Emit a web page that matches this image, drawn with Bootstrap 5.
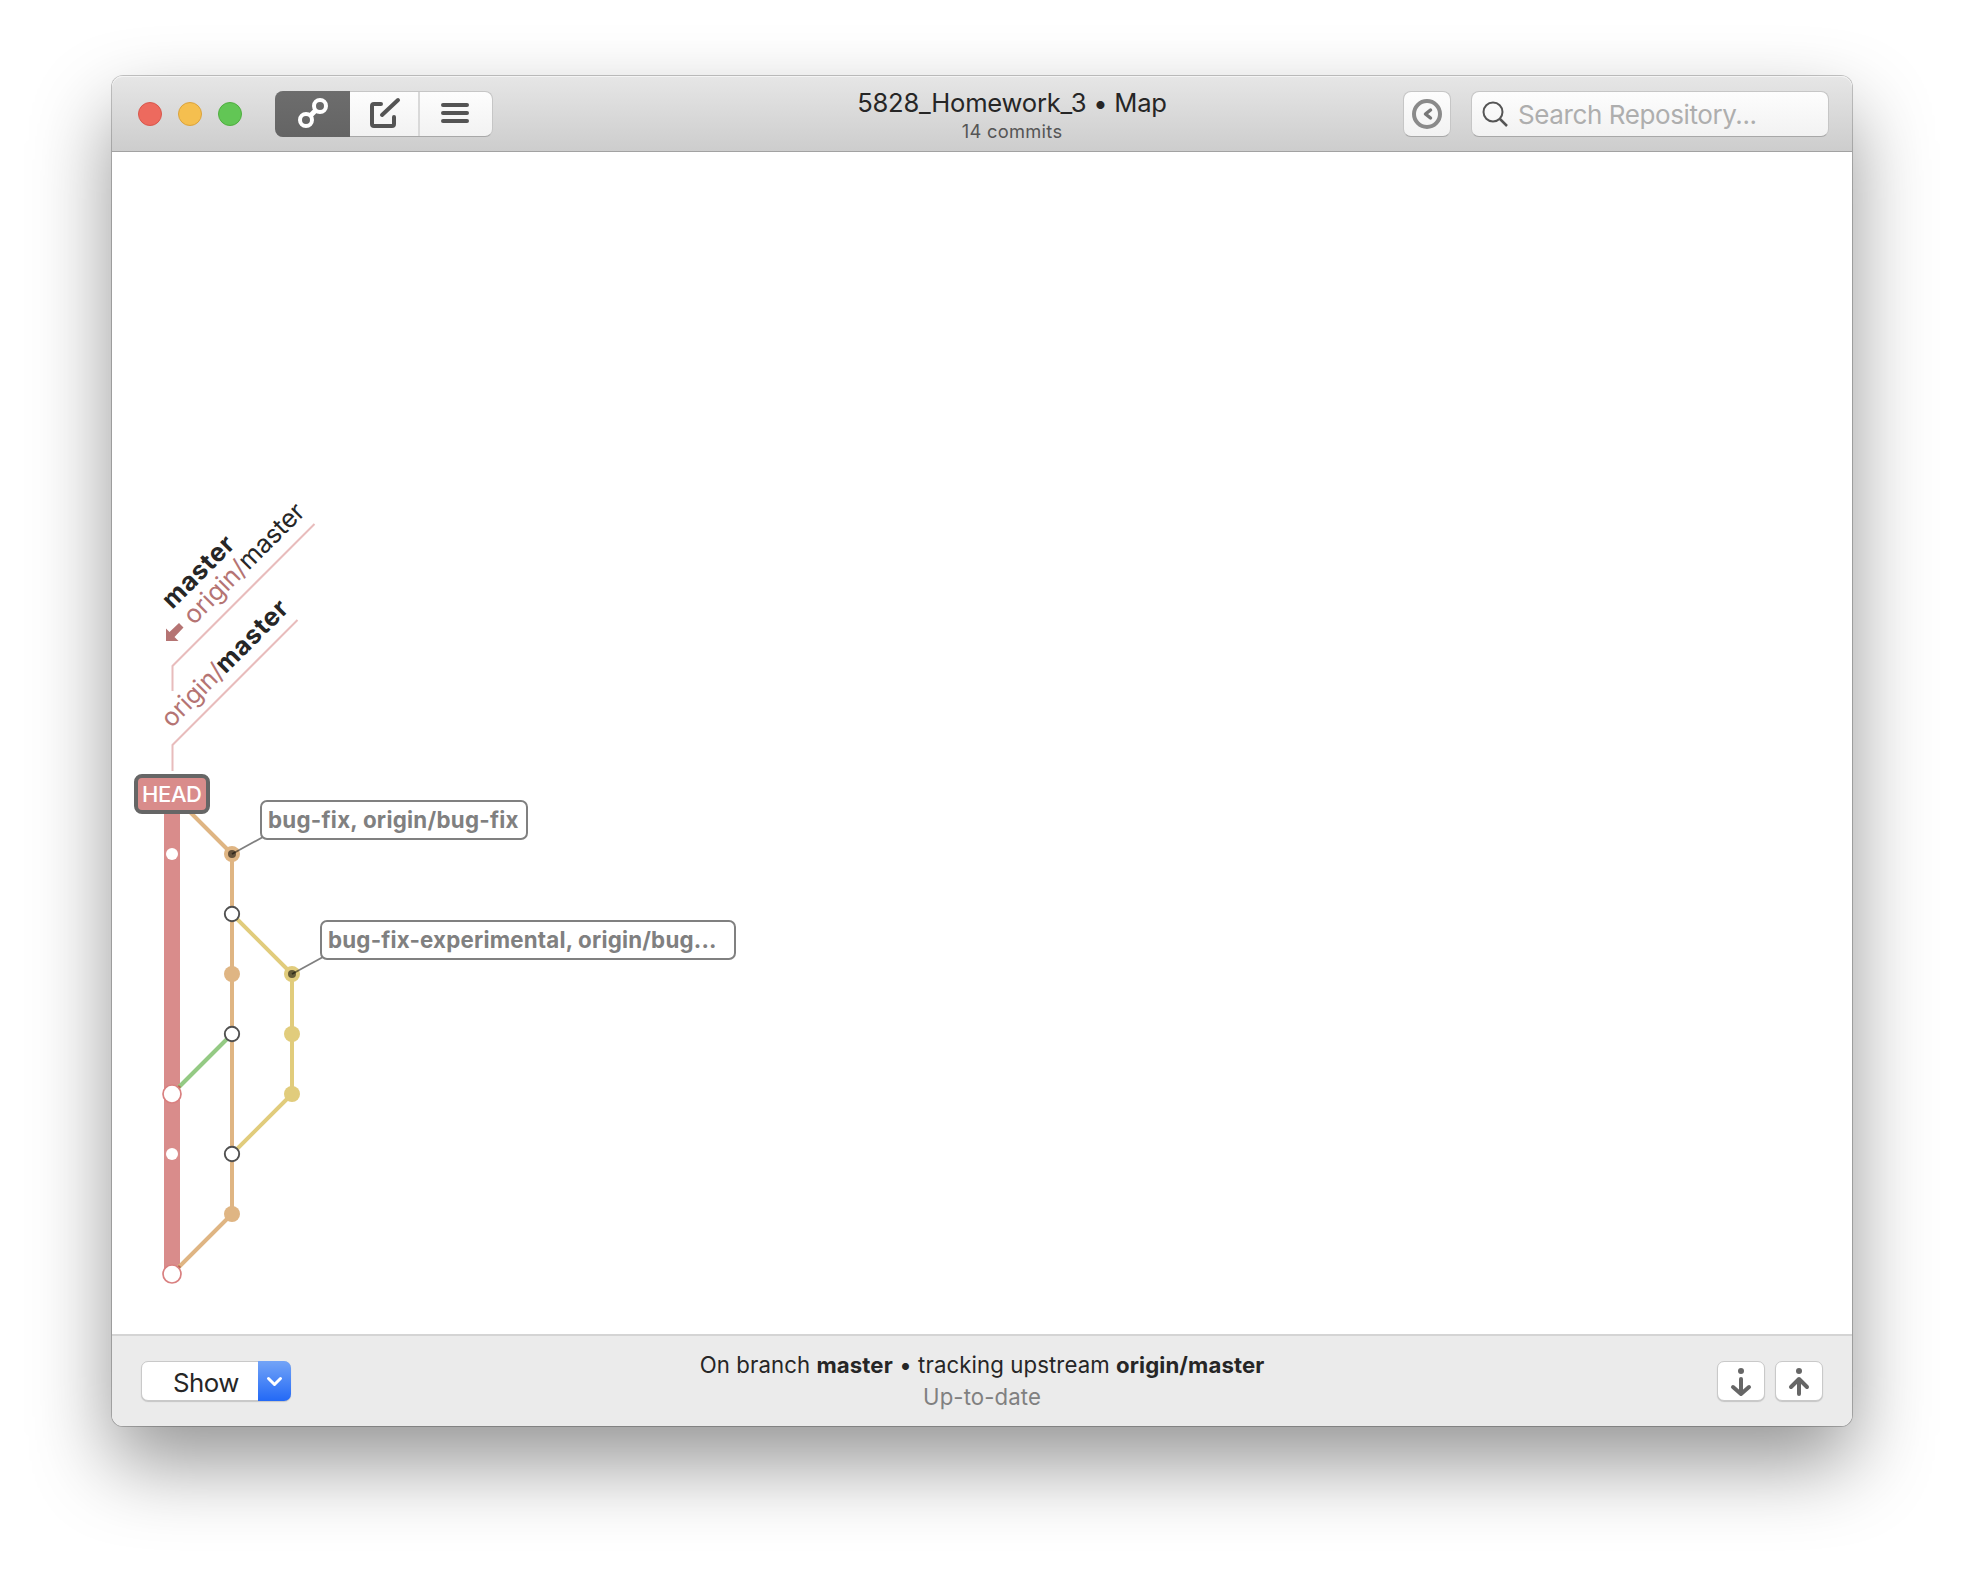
<!DOCTYPE html>
<html lang="en">
<head>
<meta charset="utf-8">
<title>5828_Homework_3 • Map</title>
<link href="https://cdn.jsdelivr.net/npm/bootstrap@5.3.0/dist/css/bootstrap.min.css" rel="stylesheet">
<style>
body{background:#fff;font-family:Inter,"Liberation Sans",sans-serif;color:#262626;padding:76px 112px 0;min-height:1574px}
.win{width:1740px;height:1350px;border-radius:11px;box-shadow:0 0 0 1px rgba(0,0,0,.22),0 37px 80px rgba(0,0,0,.42)}
.titlebar{height:76px;flex:none;background:linear-gradient(#e6e6e6,#cdcdcd);border-bottom:1px solid #a2a2a2;box-shadow:inset 0 1px #f4f4f4;padding:0 23px 0 26px;border-radius:11px 11px 0 0}
.light{width:24px;height:24px;border-radius:50%;border:1px solid}
.l-red{background:#ed6a5e;border-color:#d8574c}
.l-amber{background:#f5bf4f;border-color:#dba33c}
.l-green{background:#62c655;border-color:#4fae3f}
.ctl{background:linear-gradient(#fdfdfd,#f2f2f2);border:1px solid #c6c6c6;border-bottom-color:#a8a8a8;border-radius:8px;padding:0;height:46px}
.seg{width:218px;margin-left:33px}
.seg .btn{border:0;border-radius:0;padding:0;height:46px}
.seg .s1{width:75px;background:linear-gradient(#6d6d6d,#646464);margin:-1px 0 -1px -1px;border-radius:8px 0 0 8px}
.seg .s2{width:70px;height:44px;border-right:2px solid #d9d9d9}
.seg .s3{width:73px;height:44px}
.heading{padding-left:128px;padding-top:5px}
.h-main{font-size:25.6px;line-height:30px;letter-spacing:-.25px}
.h-sub{font-size:18.3px;line-height:26px;color:#555;letter-spacing:.3px}
.back{width:48px;margin-right:20px}
.find{width:358px;padding-left:9px}
.find input{font-size:26px;letter-spacing:-.4px;padding:2px 0 0 9px;height:44px;color:#333}
.find input::placeholder{color:#aeaeae;opacity:1}
.foot{height:92px;flex:none;background:#ebebeb;border-top:2px solid #d4d4d4;padding:0 29px;border-radius:0 0 11px 11px}
.side{width:160px}
.tools{gap:10px}
.plain{background:#fff;border:1px solid #c9c9c9;border-radius:7px;height:40px;padding:0;box-shadow:0 1px 1px rgba(0,0,0,.16)}
.show-box{width:150px}
.show-l{font-size:25.8px;letter-spacing:-.5px;width:117px;padding:3px 0 0 31px;line-height:36px;text-align:left;color:#262626}
.show-r{width:33px;height:40px;margin:-1px -1px -1px 0;background:linear-gradient(#73a4f7,#2369f6);border-radius:0 7px 7px 0}
.st{font-size:22.2px;line-height:32px;letter-spacing:.1px}
.st-sub{color:#808080}
</style>
</head>
<body>
<div class="win d-flex flex-column bg-white">
  <header class="titlebar d-flex align-items-center">
    <div class="d-flex gap-3">
      <span class="light l-red"></span><span class="light l-amber"></span><span class="light l-green"></span>
    </div>
    <div class="seg ctl d-flex">
      <button class="btn s1" aria-label="Map"><svg class="d-block" width="75" height="46" fill="none" stroke="#fff" stroke-width="4"><circle cx="31" cy="29" r="6"/><circle cx="45" cy="15" r="6"/><path d="M35 25l6-6" stroke-width="5"/></svg></button>
      <button class="btn s2" aria-label="Commit"><svg class="d-block" width="68" height="44" fill="none" stroke="#545454" stroke-width="4" stroke-linecap="round" stroke-linejoin="round"><path d="M31 12h-7q-2 0-2 2v18q0 2 2 2h18q2 0 2-2v-7"/><path d="M32 23L48 8"/></svg></button>
      <button class="btn s3" aria-label="List"><svg class="d-block" width="73" height="44" fill="none" stroke="#545454" stroke-width="4" stroke-linecap="round"><path d="M23 13h24M23 21h24M23 29h24"/></svg></button>
    </div>
    <div class="heading flex-fill text-center">
      <div class="h-main">5828_Homework_3 • Map</div>
      <div class="h-sub">14 commits</div>
    </div>
    <button class="btn ctl back" aria-label="Back"><svg class="d-block" width="46" height="44" fill="none" stroke="#8a8a8a" stroke-width="4"><circle cx="23" cy="22" r="13"/><path d="M26.500 18l-5 4 5 4" stroke="#777" stroke-linecap="round" stroke-linejoin="round" stroke-width="3.500"/></svg></button>
    <div class="ctl find d-flex align-items-center">
      <svg class="flex-shrink-0" width="28" height="28" fill="none" stroke="#555" stroke-width="2"><circle cx="12" cy="12" r="9.500"/><path d="M19 19l7 7" stroke-width="2.500"/></svg>
      <input class="form-control border-0 bg-transparent shadow-none" placeholder="Search Repository...">
    </div>
  </header>

  <main class="flex-fill overflow-hidden">
    <svg class="d-block" width="1740" height="1182" viewBox="112 152 1740 1182" font-family="Inter,'Liberation Sans',sans-serif" fill="none">
      <g stroke="#e8bcbc" stroke-width="2"><path d="M314.500 524L172.500 666v25"/><path d="M297.500 620L172.500 745v26"/></g>
      <g transform="rotate(-45)" font-size="25.500" fill="#262626">
        <text x="-309.500" y="553" font-weight="700" textLength="90.500">master</text>
        <text x="-305.500" y="579.500" fill="#b57473" textLength="77.500">origin/</text>
        <text x="-228" y="579.500" textLength="81.500">master</text>
        <text x="-394" y="636.500" fill="#b57473" textLength="77">origin/</text>
        <text x="-317.500" y="636.500" font-weight="700" textLength="91">master</text>
      </g>
      <path fill="#b57473" d="M166 641v-12.500l3.500 3.500 9.500-9 4.500 4.500-9 9.500 4 4z"/>
      <path d="M172 812V1274" stroke="#d98c8b" stroke-width="16"/>
      <g stroke-width="4" stroke-linejoin="round">
        <path d="M172 794l60 60V1214l-57 57" stroke="#dfb583"/>
        <path d="M232 914l60 60v120l-60 60" stroke="#e1cc7c"/>
        <path d="M232 1034l-57 57" stroke="#94ca84"/>
      </g>
      <path d="M176 1090l4-4M176 1270l4-4" stroke="#b86a4d" stroke-width="3"/>
      <g fill="#dfb583"><circle cx="232" cy="854" r="8"/><circle cx="232" cy="974" r="8"/><circle cx="232" cy="1214" r="8"/></g>
      <g fill="#e1cc7c"><circle cx="292" cy="974" r="8"/><circle cx="292" cy="1034" r="8"/><circle cx="292" cy="1094" r="8"/></g>
      <g fill="#fff" stroke="#505050" stroke-width="1.900"><circle cx="232" cy="914" r="7.200"/><circle cx="232" cy="1034" r="7.200"/><circle cx="232" cy="1154" r="7.200"/></g>
      <g fill="#fff"><circle cx="172" cy="854" r="6"/><circle cx="172" cy="1154" r="6"/><g stroke="#d98080" stroke-width="1.700"><circle cx="172" cy="1094" r="9"/><circle cx="172" cy="1274" r="9"/></g></g>
      <g fill="#000" fill-opacity=".55"><circle cx="232" cy="854" r="4"/><circle cx="292" cy="974" r="4"/></g>
      <g stroke="#000" stroke-opacity=".5" stroke-width="1.800"><path d="M232 854l31-17M292 974l31-17"/></g>
      <g fill="#fff" stroke="#808080" stroke-width="2"><rect x="261" y="801" width="266" height="38" rx="6"/><rect x="321" y="921" width="414" height="38" rx="6"/></g>
      <g fill="#808080" font-size="22.300" font-weight="700">
        <text x="268" y="828" textLength="250.500">bug-fix, origin/bug-fix</text>
        <text x="328" y="948" textLength="388.500">bug-fix-experimental, origin/bug...</text>
      </g>
      <rect x="136" y="776" width="72" height="36" rx="6" fill="#d98c8b" stroke="#666" stroke-width="4"/>
      <text x="142" y="802" font-size="22" font-weight="500" fill="#fff" textLength="60">HEAD</text>
    </svg>
  </main>

  <footer class="foot d-flex align-items-center justify-content-between">
    <div class="side"><div class="plain show-box d-flex">
      <button class="btn border-0 show-l">Show</button>
      <button class="btn border-0 show-r p-0" aria-label="Options"><svg class="d-block" width="33" height="40" fill="none" stroke="#fff" stroke-width="3" stroke-linecap="round" stroke-linejoin="round"><path d="M10.500 17.500l6 6 6-6"/></svg></button>
    </div></div>
    <div class="text-center">
      <div class="st">On branch <b>master</b> • tracking upstream <b>origin/master</b></div>
      <div class="st st-sub">Up-to-date</div>
    </div>
    <div class="side tools d-flex justify-content-end">
      <button class="btn plain" aria-label="Pull"><svg class="d-block" width="46" height="38" fill="none" stroke="#666" stroke-width="4" stroke-linecap="round" stroke-linejoin="round"><circle cx="23" cy="9" r="3" fill="#666" stroke="none"/><path d="M23 17v15M15 25l8 7 8-7"/></svg></button>
      <button class="btn plain" aria-label="Push"><svg class="d-block" width="46" height="38" fill="none" stroke="#666" stroke-width="4" stroke-linecap="round" stroke-linejoin="round"><circle cx="23" cy="9" r="3" fill="#666" stroke="none"/><path d="M23 32V17M15 25l8-8 8 8"/></svg></button>
    </div>
  </footer>
</div>
<script src="https://cdn.jsdelivr.net/npm/bootstrap@5.3.0/dist/js/bootstrap.bundle.min.js"></script>
</body>
</html>
